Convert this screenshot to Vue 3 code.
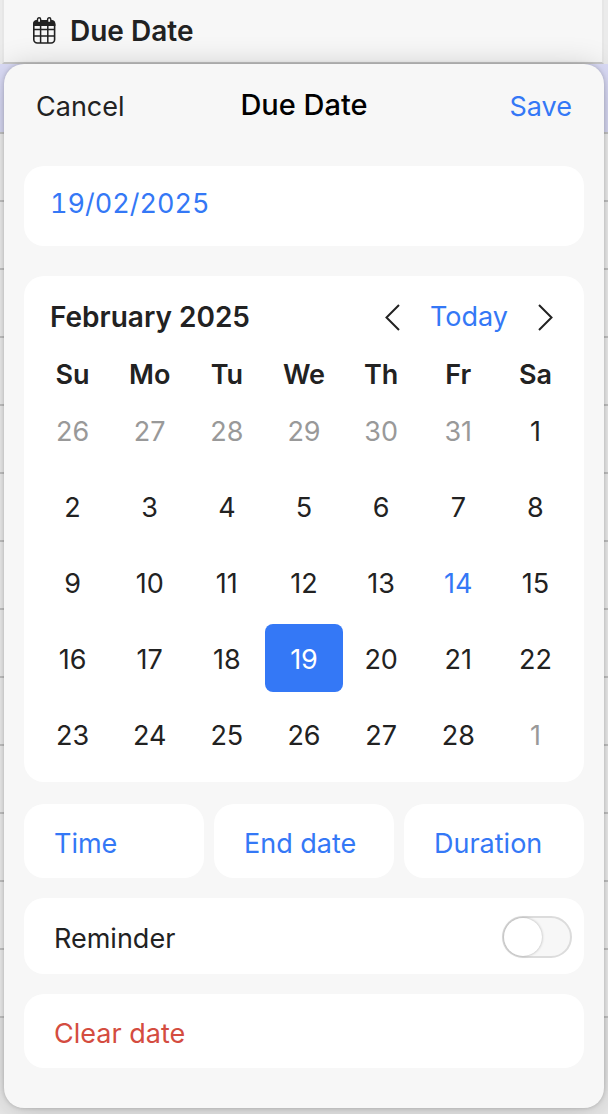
<script setup>
import { ref } from 'vue'

const date = ref('19/02/2025')
const reminder = ref(false)
const weekdays = ['Su', 'Mo', 'Tu', 'We', 'Th', 'Fr', 'Sa']
const options = ['Time', 'End date', 'Duration']

const start = new Date(2025, 0, 26)
const weeks = Array.from({ length: 5 }, (_, w) =>
  Array.from({ length: 7 }, (_, d) => {
    const day = new Date(start.getFullYear(), start.getMonth(), start.getDate() + w * 7 + d)
    const inMonth = day.getMonth() === 1
    return {
      label: day.getDate(),
      outside: !inMonth,
      today: inMonth && day.getDate() === 14,
      selected: inMonth && day.getDate() === 19
    }
  })
)
</script>

<template>
  <div class="page">
    <header class="column-head">
      <svg class="cal-icon" viewBox="0 0 24 28" aria-hidden="true">
        <rect x="1.800" y="4" width="20.800" height="22" rx="3.500" fill="none" stroke="#222" stroke-width="1.600" />
        <path d="M1 9V7q0-4 4-4h14.400q4 0 4 4v2z" fill="#222" />
        <path d="M1.500 12.400h21.400M1.500 19h21.400M8.600 7v19M15.800 7v19" stroke="#222" stroke-width="1.500" />
        <path d="M5.500 5.500V2.400a1.600 1.600 0 0 1 3.200 0v3.100zM15.600 5.500V2.400a1.600 1.600 0 0 1 3.200 0v3.100z" fill="#f7f7f7" stroke="#222" stroke-width="1.400" />
      </svg>
      <span>Due Date</span>
    </header>

    <main class="body">
      <div class="rows" aria-hidden="true">
        <div v-for="n in 14" :key="n" class="row" :class="{ active: n === 1 }"></div>
      </div>

      <section class="sheet" role="dialog" aria-label="Due Date">
        <div class="sheet-bar">
          <button class="cancel" type="button">Cancel</button>
          <h1>Due Date</h1>
          <button class="save" type="button">Save</button>
        </div>

        <input v-model="date" class="card date-input" type="text" aria-label="Date" />

        <div class="card calendar">
          <div class="month-bar">
            <h2>February 2025</h2>
            <button class="arrow" type="button" aria-label="Previous month">
              <svg viewBox="0 0 16 28"><path d="M15 2 2.500 14.500 15 27" /></svg>
            </button>
            <button class="today-btn" type="button">Today</button>
            <button class="arrow" type="button" aria-label="Next month">
              <svg viewBox="0 0 16 28"><path d="M1 2 13.500 14.500 1 27" /></svg>
            </button>
          </div>
          <table>
            <thead>
              <tr><th v-for="d in weekdays" :key="d" scope="col">{{ d }}</th></tr>
            </thead>
            <tbody>
              <tr v-for="(week, i) in weeks" :key="i">
                <td v-for="(day, j) in week" :key="j">
                  <button
                    type="button"
                    class="day"
                    :class="{ outside: day.outside, today: day.today, selected: day.selected }"
                    :aria-pressed="day.selected"
                  >{{ day.label }}</button>
                </td>
              </tr>
            </tbody>
          </table>
        </div>

        <div class="options">
          <button v-for="o in options" :key="o" class="card line" type="button">{{ o }}</button>
        </div>

        <label class="card line reminder">
          <span>Reminder</span>
          <input v-model="reminder" class="switch" type="checkbox" role="switch" />
        </label>

        <button class="card line clear" type="button">Clear date</button>
      </section>
    </main>
  </div>
</template>

<style>
body {
  margin: 0;
  background: #ebebeb;
}
</style>

<style scoped>
.page,
.page * {
  box-sizing: border-box;
}

.page {
  font-family: Inter, "Liberation Sans", sans-serif;
  font-size: 27px;
  line-height: 32px;
  color: #222;
  overflow: hidden;
}

button,
input {
  font: inherit;
  color: inherit;
  background: none;
  border: 0;
  margin: 0;
  padding: 0;
}

h1,
h2 {
  margin: 0;
}

.column-head {
  display: flex;
  align-items: center;
  gap: 14px;
  height: 64px;
  margin: 0 4px 0 2px;
  padding: 0 0 0 28px;
  background: #f7f7f7;
  border: solid #e6e6e6;
  border-width: 0 2px 2px;
  border-bottom-color: #c8c8c8;
  font-size: 28px;
  font-weight: 600;
}

.cal-icon {
  width: 24px;
  height: 28px;
}

.body {
  position: relative;
  padding: 0 4px 6px;
}

.rows {
  position: absolute;
  inset: 0;
  overflow: hidden;
}

.row {
  height: 68px;
  border-bottom: 2px solid #c8c8c8;
  background: #f4f4f4;
}

.row.active {
  height: 70px;
  background: #dcddf8;
}

.sheet {
  position: relative;
  display: flex;
  flex-direction: column;
  padding: 16px 20px 40px;
  border-radius: 20px;
  background: #f7f7f7;
  box-shadow: 0 4px 32px rgba(0, 0, 0, 0.2), 0 0 4px rgba(0, 0, 0, 0.2);
}

.sheet-bar {
  display: grid;
  grid-template-columns: 1fr auto 1fr;
  align-items: center;
  height: 54px;
  padding: 0 12px;
  margin-bottom: 32px;
}

.sheet-bar h1 {
  padding-bottom: 4px;
  font-size: 29px;
  font-weight: 500;
  color: #000;
}

.cancel {
  justify-self: start;
}

.save {
  justify-self: end;
}

.save,
.today-btn,
.date-input,
.options .card {
  color: #3478f6;
}

.card {
  background: #fff;
  border-radius: 20px;
}

.date-input {
  width: 100%;
  height: 80px;
  padding: 0 26px 6px;
  margin-bottom: 30px;
  font-variant-numeric: tabular-nums;
}

.calendar {
  padding: 16px 10px 10px;
  margin-bottom: 22px;
}

.month-bar {
  display: flex;
  align-items: center;
  height: 48px;
  padding: 2px 20px 0 16px;
}

.month-bar h2 {
  flex: 1;
  font-size: 28px;
  font-weight: 600;
}

.arrow {
  display: flex;
}

.arrow svg {
  width: 16px;
  height: 28px;
  fill: none;
  stroke: #222;
  stroke-width: 2;
}

.today-btn {
  margin: 0 30px;
}

table {
  width: 100%;
  table-layout: fixed;
  border-collapse: collapse;
}

th {
  height: 52px;
  padding: 18px 0 0;
  font-weight: 600;
}

td {
  padding: 4px 0;
}

.day {
  display: block;
  width: 100%;
  height: 68px;
  padding-top: 4px;
  border-radius: 8px;
}

.day.outside {
  color: #999;
}

.day.today {
  color: #3478f6;
}

.day.selected {
  color: #fff;
  background: #3478f6;
}

.options {
  display: grid;
  grid-template-columns: repeat(3, 1fr);
  gap: 10px;
  margin-bottom: 20px;
}

.line {
  min-height: 74px;
  padding: 6px 30px 0;
  text-align: left;
  white-space: nowrap;
}

.reminder {
  display: flex;
  align-items: center;
  justify-content: space-between;
  height: 76px;
  padding: 6px 12px 0 30px;
  margin-bottom: 20px;
}

.switch {
  appearance: none;
  display: flex;
  width: 70px;
  height: 42px;
  margin-bottom: 4px;
  border: 2px solid #dcdcdc;
  border-radius: 21px;
  background: #f7f7f7;
}

.switch::before {
  content: "";
  width: 38px;
  height: 38px;
  border-radius: 50%;
  background: #fff;
  box-shadow: 0 0 3px rgba(0, 0, 0, 0.3);
}

.switch:checked {
  justify-content: flex-end;
  background: #3478f6;
}

.clear {
  color: #d44c40;
}
</style>
